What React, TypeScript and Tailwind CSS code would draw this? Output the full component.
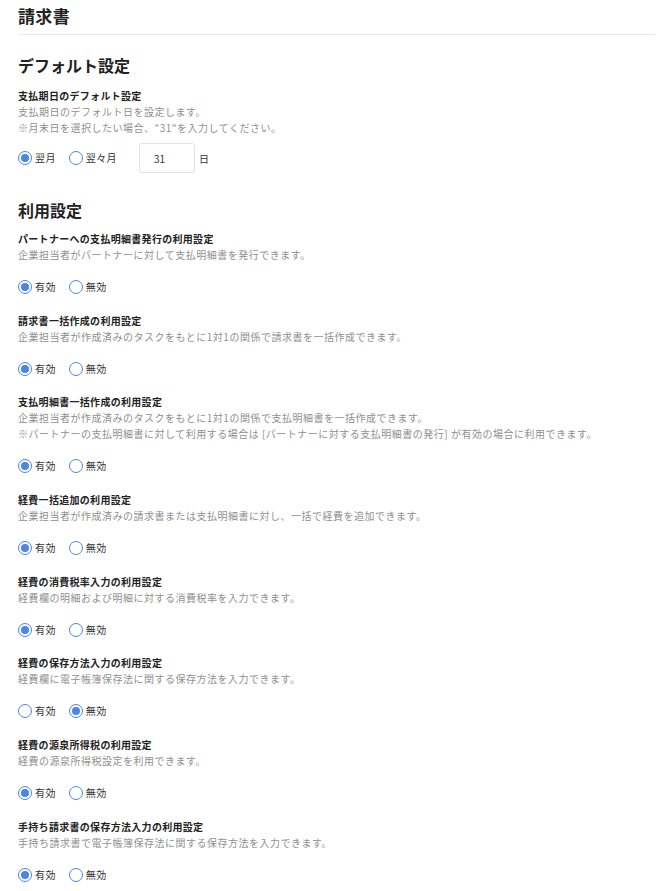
import { useState } from 'react';

interface UsageSetting {
  id: string;
  title: string;
  descriptions: string[];
  enabled: boolean;
}

const initialSettings: UsageSetting[] = [
  {
    id: 'partner-statement',
    title: 'パートナーへの支払明細書発行の利用設定',
    descriptions: ['企業担当者がパートナーに対して支払明細書を発行できます。'],
    enabled: true,
  },
  {
    id: 'bulk-invoice',
    title: '請求書一括作成の利用設定',
    descriptions: ['企業担当者が作成済みのタスクをもとに1対1の関係で請求書を一括作成できます。'],
    enabled: true,
  },
  {
    id: 'bulk-statement',
    title: '支払明細書一括作成の利用設定',
    descriptions: [
      '企業担当者が作成済みのタスクをもとに1対1の関係で支払明細書を一括作成できます。',
      '※パートナーの支払明細書に対して利用する場合は [パートナーに対する支払明細書の発行] が有効の場合に利用できます。',
    ],
    enabled: true,
  },
  {
    id: 'bulk-expense',
    title: '経費一括追加の利用設定',
    descriptions: ['企業担当者が作成済みの請求書または支払明細書に対し、一括で経費を追加できます。'],
    enabled: true,
  },
  {
    id: 'expense-tax',
    title: '経費の消費税率入力の利用設定',
    descriptions: ['経費欄の明細および明細に対する消費税率を入力できます。'],
    enabled: true,
  },
  {
    id: 'expense-storage',
    title: '経費の保存方法入力の利用設定',
    descriptions: ['経費欄に電子帳簿保存法に関する保存方法を入力できます。'],
    enabled: false,
  },
  {
    id: 'expense-withholding',
    title: '経費の源泉所得税の利用設定',
    descriptions: ['経費の源泉所得税設定を利用できます。'],
    enabled: true,
  },
  {
    id: 'paper-invoice-storage',
    title: '手持ち請求書の保存方法入力の利用設定',
    descriptions: ['手持ち請求書で電子帳簿保存法に関する保存方法を入力できます。'],
    enabled: true,
  },
];

function Radio({ checked, label, onClick }: { checked: boolean; label: string; onClick: () => void }) {
  return (
    <button type="button" onClick={onClick} className="flex items-center gap-[3px] h-4">
      <span className="flex items-center justify-center w-[14px] h-[14px] rounded-full border-[1.5px] border-[#4a86e8] bg-white">
        {checked && <span className="w-[8px] h-[8px] rounded-full bg-[#4a86e8]" />}
      </span>
      <span className="text-[10px] leading-4 text-[#333] tracking-[0.04em]">{label}</span>
    </button>
  );
}

export default function App() {
  const [settings, setSettings] = useState(initialSettings);
  const [nextMonth, setNextMonth] = useState(true);
  const [day, setDay] = useState('31');

  const toggle = (id: string, value: boolean) => {
    setSettings((prev) => prev.map((s) => (s.id === id ? { ...s, enabled: value } : s)));
  };

  return (
    <div
      className="min-h-screen bg-white pl-[18px] pr-4 text-[#222]"
      style={{ fontFamily: '"Noto Sans CJK JP", "Noto Sans", sans-serif' }}
    >
      <div className="pt-1 pb-[6px] border-b border-[#e3ebea]">
        <h1 className="text-[17px] leading-6 font-bold tracking-[0.02em]">請求書</h1>
      </div>

      {/* デフォルト設定 */}
      <h2 className="mt-[18px] text-[16px] leading-6 font-bold">デフォルト設定</h2>
      <div className="mt-[11px]">
        <h3 className="text-[10px] leading-4 font-bold tracking-[0.03em]">支払期日のデフォルト設定</h3>
        <p className="text-[10px] leading-4 text-[#8f8f8f] tracking-[0.05em]">支払期日のデフォルト日を設定します。</p>
        <p className="text-[10px] leading-4 text-[#8f8f8f] tracking-[0.05em]">※月末日を選択したい場合、"31"を入力してください。</p>
        <div className="mt-[7px] flex items-center">
          <Radio checked={nextMonth} label="翌月" onClick={() => setNextMonth(true)} />
          <div className="ml-[13px]">
            <Radio checked={!nextMonth} label="翌々月" onClick={() => setNextMonth(false)} />
          </div>
          <input
            value={day}
            onChange={(e) => setDay(e.target.value)}
            className="ml-[22px] w-[56px] h-[30px] rounded-[3px] border border-[#dfe4e6] pl-[14px] text-[10px] text-[#333] outline-none"
          />
          <span className="ml-[4px] text-[10px] text-[#333]">日</span>
        </div>
      </div>

      {/* 利用設定 */}
      <h2 className="mt-[25px] text-[16px] leading-6 font-bold">利用設定</h2>
      <div className="mt-[9px]">
        {settings.map((s) => (
          <div key={s.id} className="pb-[17.7px]">
            <h3 className="text-[10px] leading-4 font-bold tracking-[0.03em]">{s.title}</h3>
            {s.descriptions.map((d, i) => (
              <p key={i} className="text-[10px] leading-4 text-[#8f8f8f] tracking-[0.05em]">
                {d}
              </p>
            ))}
            <div className="mt-4 flex items-center gap-[13px]">
              <Radio checked={s.enabled} label="有効" onClick={() => toggle(s.id, true)} />
              <Radio checked={!s.enabled} label="無効" onClick={() => toggle(s.id, false)} />
            </div>
          </div>
        ))}
      </div>
    </div>
  );
}
